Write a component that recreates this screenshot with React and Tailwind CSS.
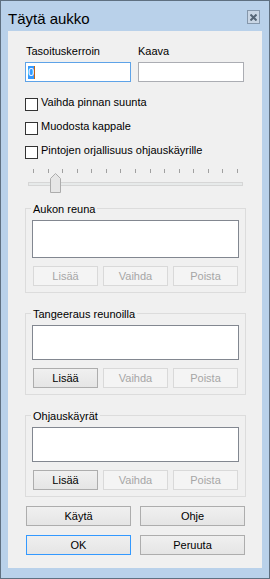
import React from "react";

function Btn({ children, kind = "disabled", w = "w-[65px]" }) {
  const cls =
    kind === "disabled"
      ? "border-[#d9d9d9] bg-[#f4f4f4] text-[#a6a6a6]"
      : kind === "focus"
      ? "border-[#3399ff] bg-gradient-to-b from-[#efefef] to-[#e5e5e5] text-black"
      : "border-[#adadad] bg-gradient-to-b from-[#f0f0f0] to-[#e5e5e5] text-black";
  return (
    <div className={`${w} h-[20px] flex items-center justify-center border ${cls} text-[11px] leading-[13px]`}>
      {children}
    </div>
  );
}

function Check({ label, first }) {
  return (
    <div className={`flex items-start h-[15px] ${first ? "mt-[14px]" : "mt-[9px]"}`}>
      <div className="w-[13px] h-[13px] mt-[2px] border border-[#333333] bg-white" />
      <span className="ml-[3px] text-[11px] leading-[13px] text-black">{label}</span>
    </div>
  );
}

function Group({ title, mt, listH, firstEnabled }) {
  return (
    <div className={`relative w-[221px] border border-[#dcdcdc] pl-[6px] pt-[11px] pb-[6px] ${mt}`}>
      <span className="absolute left-[5px] top-[-6px] px-[2px] bg-[#f0f0f0] text-[11px] leading-[13px] text-black">
        {title}
      </span>
      <div className={`w-[207px] ${listH} border border-[#828790] bg-white`} />
      <div className="flex gap-[5px] ml-[1px] mt-[8px]">
        <Btn kind={firstEnabled ? "normal" : "disabled"}>Lisää</Btn>
        <Btn>Vaihda</Btn>
        <Btn>Poista</Btn>
      </div>
    </div>
  );
}

function Slider() {
  const ticks = [];
  for (let i = 0; i < 15; i++) {
    const x = Math.round(8 + i * 14.57) + 0.5;
    ticks.push(<line key={i} x1={x} y1={2} x2={x} y2={6} stroke="#a0a0a0" strokeWidth="1" />);
  }
  return (
    <svg width="220" height="28" className="mt-[8px] block">
      {ticks}
      <rect x="3.5" y="15.5" width="214" height="3" fill="#e7eaea" stroke="#d6d6d6" />
      <path d="M25.5 11.5 L30.5 6.5 L35.5 11.5 L35.5 25.5 L25.5 25.5 Z" fill="#e6e6e6" stroke="#acacac" />
    </svg>
  );
}

export default function App() {
  return (
    <div className="w-[270px] h-[579px] border border-[#5f7081] bg-[#b9d1ea] flex flex-col px-[7px] font-['Liberation_Sans',Arial,sans-serif]">
      <div className="h-[30px] flex justify-between items-start pt-[9px]">
        <span className="text-[15px] leading-[17px] text-black">Täytä aukko</span>
        <div className="mr-[2px] w-[13px] h-[14px] border border-[#8597ab] bg-[#c9d6e5] flex items-center justify-center">
          <svg width="7" height="7" viewBox="0 0 7 7">
            <path d="M0.5 0.5 L6.5 6.5 M6.5 0.5 L0.5 6.5" stroke="#566677" strokeWidth="2" />
          </svg>
        </div>
      </div>
      <div className="w-[254px] h-[537px] bg-[#f0f0f0] pl-[17px] pt-[14px] flex flex-col">
        <div className="flex text-[11px] leading-[13px] text-black">
          <span className="w-[113px] pl-[1px]">Tasoituskerroin</span>
          <span>Kaava</span>
        </div>
        <div className="flex gap-[7px] mt-[4px]">
          <div className="w-[106px] h-[20px] border border-[#5ea3e8] bg-white flex items-center pl-[2px]">
            <span className="bg-[#3399ff] text-white text-[11px] leading-[13px] px-[0px]">0</span>
            <span className="w-[1px] h-[13px] bg-[#c2650f]" />
          </div>
          <div className="w-[106px] h-[20px] border border-[#abadb3] bg-white" />
        </div>
        <Check first label="Vaihda pinnan suunta" />
        <Check label="Muodosta kappale" />
        <Check label="Pintojen orjallisuus ohjauskäyrille" />
        <Slider />
        <Group title="Aukon reuna" mt="mt-[13px]" listH="h-[38px]" />
        <Group title="Tangeeraus reunoilla" mt="mt-[20px]" listH="h-[35px]" firstEnabled />
        <Group title="Ohjauskäyrät" mt="mt-[20px]" listH="h-[35px]" firstEnabled />
        <div className="flex gap-[9px] mt-[9px] ml-[1px]">
          <Btn kind="normal" w="w-[105px]">Käytä</Btn>
          <Btn kind="normal" w="w-[105px]">Ohje</Btn>
        </div>
        <div className="flex gap-[9px] mt-[9px] ml-[1px]">
          <Btn kind="focus" w="w-[105px]">OK</Btn>
          <Btn kind="normal" w="w-[105px]">Peruuta</Btn>
        </div>
      </div>
    </div>
  );
}
